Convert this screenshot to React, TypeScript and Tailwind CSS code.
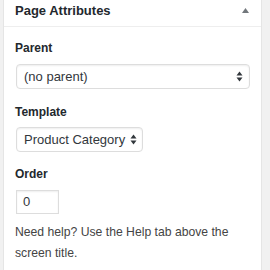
import type React from "react";

const SortArrows: React.FC = () => (
  <svg width="7" height="11" viewBox="0 0 7 11" className="shrink-0">
    <path d="M3.5 0.5 L6.5 4.5 L0.5 4.5 Z" fill="#32373c" />
    <path d="M3.5 10.5 L6.5 6.5 L0.5 6.5 Z" fill="#32373c" />
  </svg>
);

export default function App() {
  return (
    <div
      className="w-[270px] h-[270px] bg-[#f1f1f1] overflow-hidden"
      style={{ fontFamily: '"Liberation Sans", Arial, sans-serif' }}
    >
      <div className="ml-[3px] w-[259px] h-full bg-white border-x border-[#e5e5e5]">
        {/* Header */}
        <div className="h-[27px] flex items-center justify-between pl-[11px] pr-[12px] border-b border-[#eeeeee]">
          <h2 className="text-[13px] font-bold text-[#23282d] leading-none -mt-[5px]">
            Page Attributes
          </h2>
          <svg width="7" height="5" viewBox="0 0 7 5" className="-mt-[5px]">
            <path d="M3.5 0 L7 5 L0 5 Z" fill="#72777c" />
          </svg>
        </div>

        {/* Body */}
        <div className="flex flex-col items-start pl-[11px] pr-[10px]">
          <p className="mt-[12px] text-[12px] leading-[18px] font-bold text-[#23282d]">
            Parent
          </p>
          <div className="mt-[7px] ml-[1px] w-[234px] h-[25px] flex items-center justify-between pl-[7px] pr-[6px] border border-[#dddddd] rounded-[4px] shadow-[inset_0_1px_2px_rgba(0,0,0,0.07)] text-[13px] text-[#32373c]">
            <span>(no parent)</span>
            <SortArrows />
          </div>

          <p className="mt-[14px] text-[12px] leading-[18px] font-bold text-[#23282d]">
            Template
          </p>
          <div className="mt-[6px] ml-[1px] w-[127px] h-[25px] flex items-center justify-between pl-[7px] pr-[5px] border border-[#dddddd] rounded-[4px] shadow-[inset_0_1px_2px_rgba(0,0,0,0.07)] text-[13px] text-[#32373c]">
            <span>Product Category</span>
            <SortArrows />
          </div>

          <p className="mt-[13px] text-[12px] leading-[18px] font-bold text-[#23282d]">
            Order
          </p>
          <div className="mt-[7px] ml-[1px] w-[43px] h-[24px] flex items-center pl-[6px] border border-[#dddddd] shadow-[inset_0_1px_2px_rgba(0,0,0,0.07)] text-[13px] text-[#32373c]">
            0
          </div>

          <p className="mt-[8px] text-[12.2px] leading-[21px] text-[#444444]">
            Need help? Use the Help tab above the screen title.
          </p>
        </div>
      </div>
    </div>
  );
}
